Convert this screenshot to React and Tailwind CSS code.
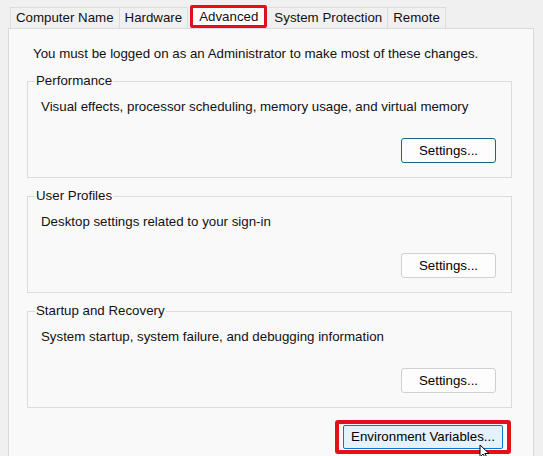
import React from "react";

const font = { fontFamily: '"Liberation Sans", Arial, sans-serif' };

function Tab({ label, active }) {
  if (active) {
    return (
      <div className="relative h-[23px] -mt-[2px] flex items-center px-[6px] bg-white border-[3px] border-[#e3101b] rounded-[2px] mx-[2px]">
        <span className="leading-none">{label}</span>
      </div>
    );
  }
  return (
    <div className="h-[21px] flex items-center px-[5px] bg-[#f0f0f0] border-t border-r border-[#dcdcdc] first:border-l">
      <span className="leading-none">{label}</span>
    </div>
  );
}

function SettingsButton({ focused }) {
  return (
    <button
      className={
        "w-[95px] h-[25px] rounded-[3px] bg-[#fdfdfd] text-[13.3px] text-black " +
        (focused ? "border-[1.5px] border-[#1a6680]" : "border border-[#d0d0d0]")
      }
    >
      Settings...
    </button>
  );
}

function Group({ title, text, focused, className }) {
  return (
    <fieldset className={"border border-[#dcdcdc] ml-[18px] w-[485px] h-[105px] px-0 pb-0 " + (className || "")}>
      <legend className="ml-[7px] px-[1px] leading-[16px] text-[13.3px]">{title}</legend>
      <div className="pl-[13px] mt-[10px] leading-[16px]">{text}</div>
      <div className="flex justify-end pr-[15px] mt-[23px]">
        <SettingsButton focused={focused} />
      </div>
    </fieldset>
  );
}

export default function App() {
  return (
    <div
      className="w-[543px] h-[456px] bg-[#f0f0f0] overflow-hidden relative text-[13.3px] text-[#111]"
      style={font}
    >
      <div className="pt-[7px] pl-[10px] flex items-end">
        <Tab label="Computer Name" />
        <Tab label="Hardware" />
        <Tab label="Advanced" active />
        <Tab label="System Protection" />
        <Tab label="Remote" />
      </div>
      <div className="ml-[8px] w-[526px] h-[440px] bg-[#f9f9f9] border border-[#dadada] pt-[17px]">
        <div className="pl-[24px] leading-[16px]">
          You must be logged on as an Administrator to make most of these changes.
        </div>
        <Group
          className="mt-[11px]"
          title="Performance"
          text="Visual effects, processor scheduling, memory usage, and virtual memory"
          focused
        />
        <Group
          className="mt-[10px]"
          title="User Profiles"
          text="Desktop settings related to your sign-in"
        />
        <Group
          className="mt-[10px]"
          title="Startup and Recovery"
          text="System startup, system failure, and debugging information"
        />
        <div className="flex justify-end pr-[22px] mt-[12px]">
          <div className="border-[4px] border-[#e3101b] rounded-[3px] px-[4px] py-[1px]">
            <button className="w-[160px] h-[24px] bg-[#e5f1fb] border border-[#0078d7] rounded-[2px] text-[13.3px] text-black">
              Environment Variables...
            </button>
          </div>
        </div>
      </div>
      <svg
        className="absolute left-[479px] top-[444px]"
        width="14"
        height="14"
        viewBox="0 0 14 14"
      >
        <path d="M1 1 L1 13 L4 10 L6.5 14 L8 13 L5.8 9.5 L10 9.5 Z" fill="#fff" stroke="#000" strokeWidth="1" />
      </svg>
    </div>
  );
}
